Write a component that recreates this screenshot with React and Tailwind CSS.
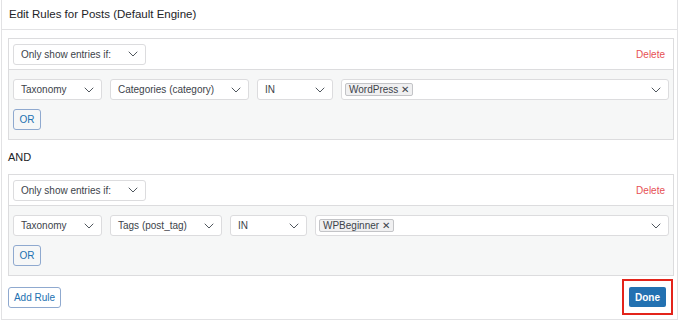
import React from "react";

function Chevron() {
  return (
    <svg width="10" height="6" viewBox="0 0 10 6" fill="none" className="shrink-0">
      <path d="M1 1l4 4 4-4" stroke="#50575e" strokeWidth="1" strokeLinecap="round" strokeLinejoin="round" />
    </svg>
  );
}

function Select({ label, width }) {
  return (
    <div className={`${width} h-[21px] flex items-center justify-between pl-[7px] pr-[7px] bg-white border border-[#dcdcde] rounded-[3px] text-[10px] text-[#3c434a]`}>
      <span>{label}</span>
      <Chevron />
    </div>
  );
}

function TagBox({ tag }) {
  return (
    <div className="flex-1 h-[21px] flex items-center justify-between pl-[3px] pr-[7px] bg-white border border-[#dcdcde] rounded-[3px]">
      <span className="h-[13px] flex items-center gap-[3px] px-[3px] bg-[#f0f0f1] border border-[#c3c4c7] rounded-[2px] text-[10px] text-[#3c434a]">
        {tag}
        <span className="text-[10px] leading-none font-light">✕</span>
      </span>
      <Chevron />
    </div>
  );
}

function RuleBox({ field }) {
  return (
    <div className="border border-[#dcdcde]">
      <div className="h-[30px] flex items-center justify-between px-[4px] bg-white">
        <Select label="Only show entries if:" width="w-[133px]" />
        <span className="text-[10px] text-[#e65054] pr-[4px]">Delete</span>
      </div>
      <div className="border-t border-[#dcdcde] bg-[#f6f7f7] px-[4px] pt-[9px] pb-[9px] flex flex-col gap-[9px]">
        <div className="flex gap-[8px]">
          <Select label="Taxonomy" width="w-[89px]" />
          <Select label={field.label} width={field.width} />
          <Select label="IN" width={field.inWidth} />
          <TagBox tag={field.tag} />
        </div>
        <div className="flex">
          <button className="h-[21px] w-[28px] border border-[#8fa9cf] rounded-[3px] bg-[#f6f7f7] text-[10px] text-[#2271b1]">OR</button>
        </div>
      </div>
    </div>
  );
}

export default function App() {
  return (
    <div className="w-[680px] h-[321px] bg-white font-['Liberation_Sans',Arial,sans-serif]">
      <div className="ml-[1px] w-[677px] h-[320px] border-x border-b border-[#e2e2e4]">
        <div className="h-[30px] border-b border-[#e2e2e4] flex items-center px-[7px] text-[11.5px] text-[#1d2327]">
          Edit Rules for Posts (Default Engine)
        </div>
        <div className="pl-[6px] pr-[3px] pt-[8px]">
          <RuleBox field={{ label: "Categories (category)", width: "w-[139px]", inWidth: "w-[76px]", tag: "WordPress" }} />
          <div className="h-[34px] flex items-center text-[11px] text-[#1d2327]">AND</div>
          <RuleBox field={{ label: "Tags (post_tag)", width: "w-[112px]", inWidth: "w-[77px]", tag: "WPBeginner" }} />
          <div className="mt-[3px] flex items-center justify-between">
            <button className="h-[21px] w-[53px] border border-[#8fa9cf] rounded-[3px] bg-white text-[10px] text-[#2271b1]">Add Rule</button>
            <div className="flex border-2 border-[#e3241b] px-[5px] py-[6px] mr-[1px]">
              <button className="h-[20px] w-[37px] rounded-[2px] bg-[#2271b1] text-white text-[10px] font-bold">Done</button>
            </div>
          </div>
        </div>
      </div>
    </div>
  );
}
